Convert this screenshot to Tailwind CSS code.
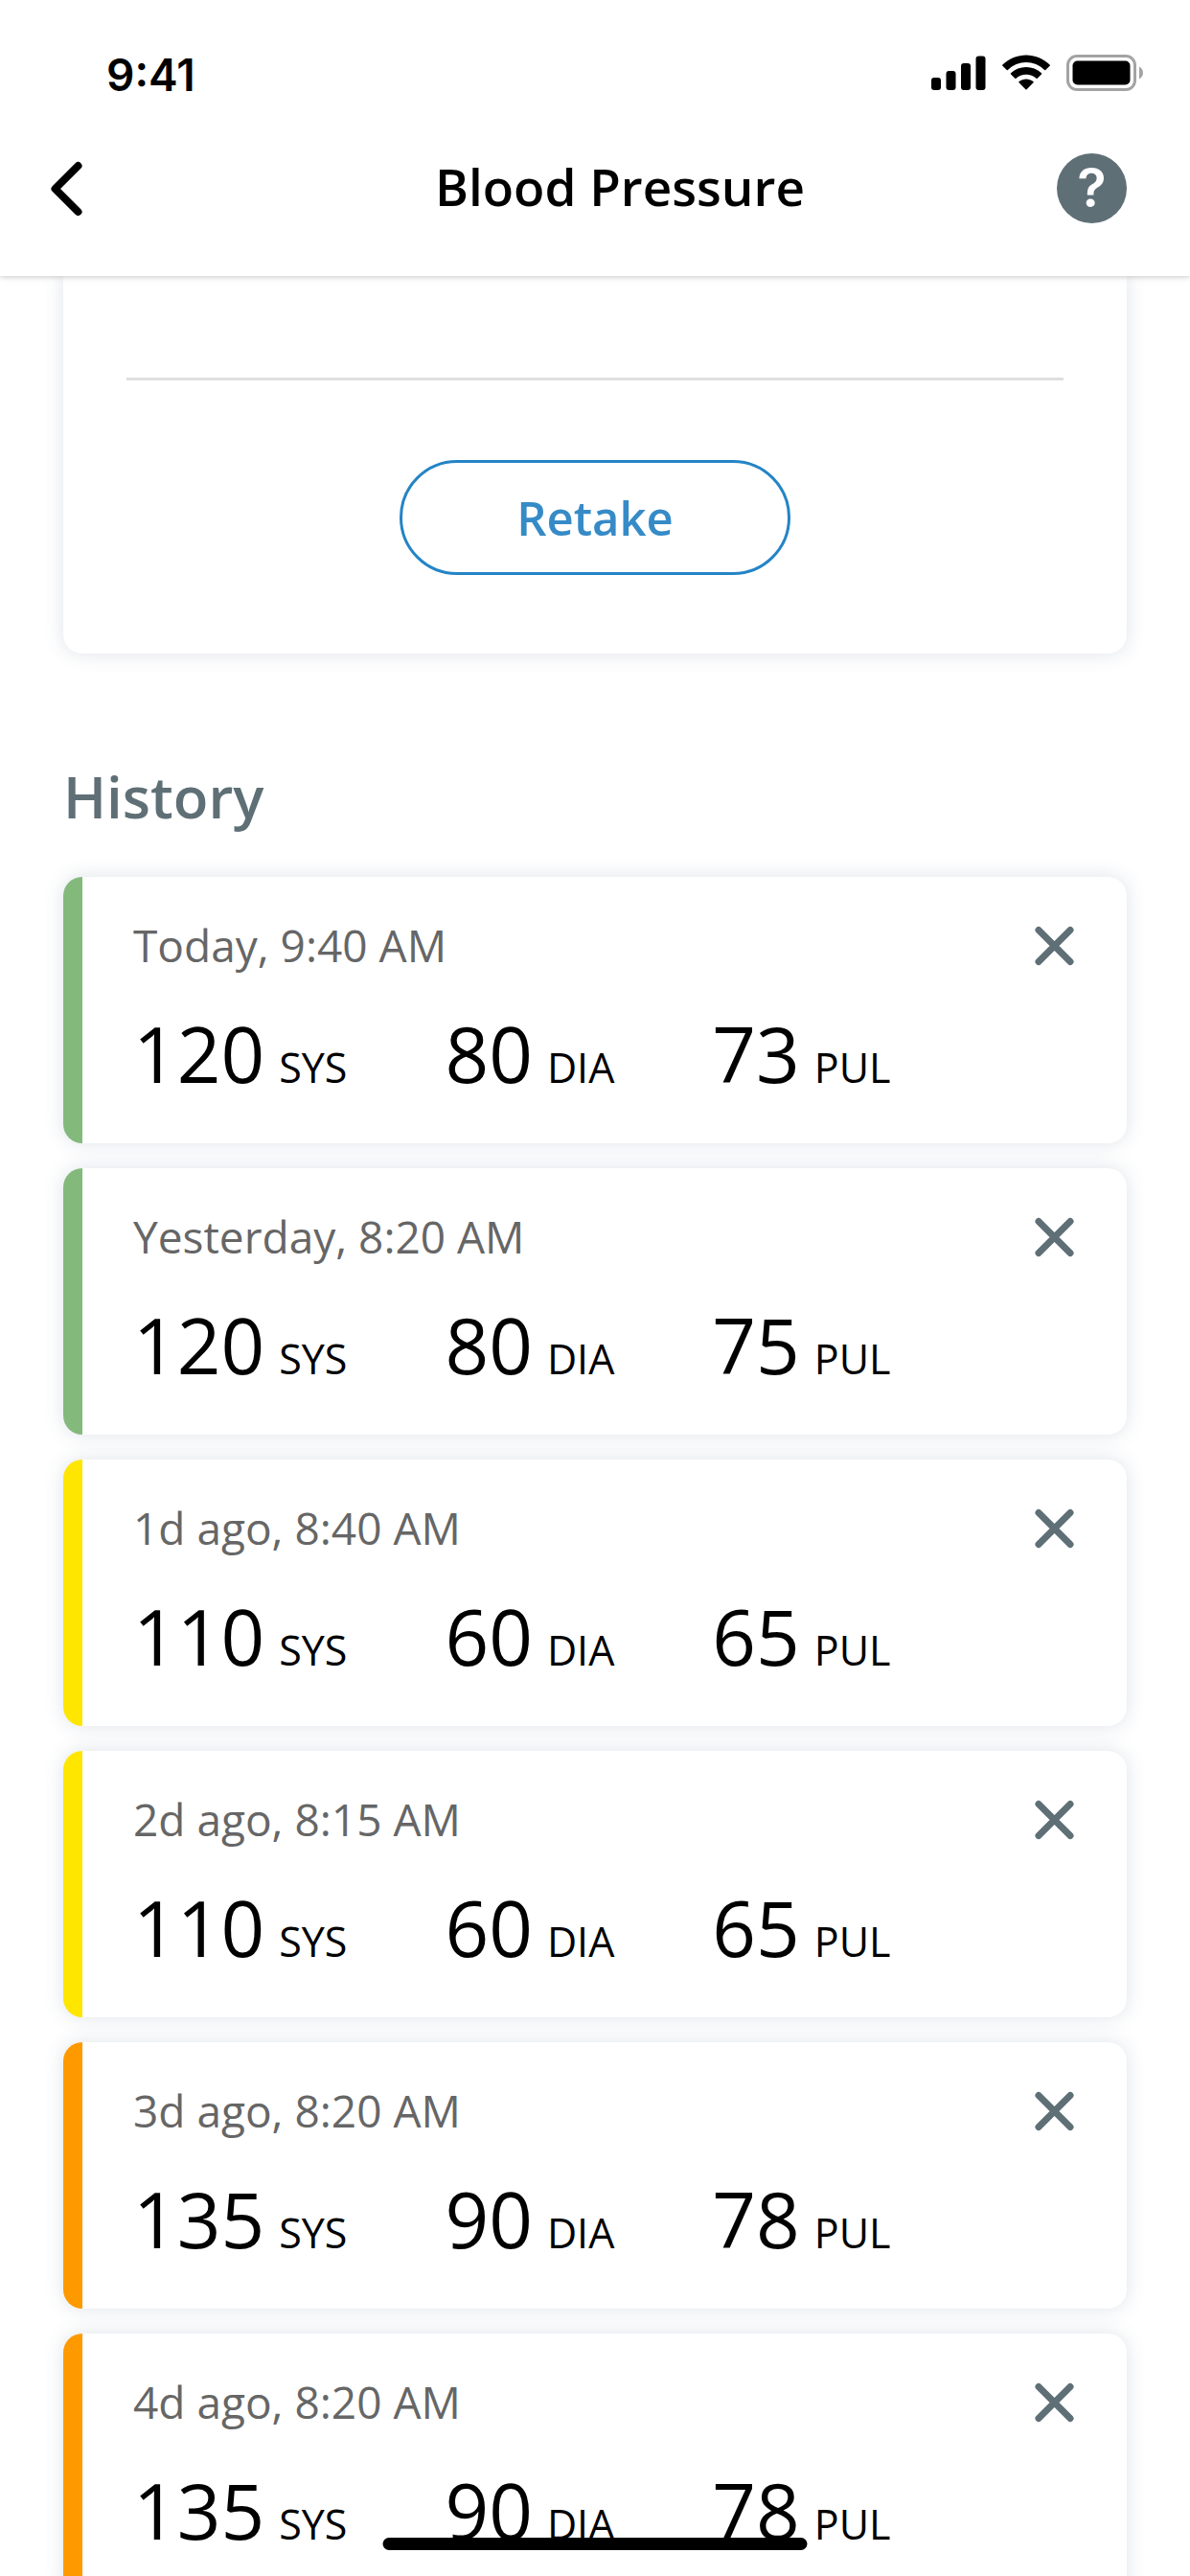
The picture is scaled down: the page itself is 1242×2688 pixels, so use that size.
<!DOCTYPE html>
<html lang="en">
<head>
<meta charset="utf-8">
<meta name="viewport" content="width=device-width, initial-scale=1">
<title>Blood Pressure</title>
<script src="https://cdn.jsdelivr.net/npm/@tailwindcss/browser@4"></script>
</head>
<body class="h-screen flex flex-col overflow-hidden bg-white font-['Open_Sans',sans-serif] text-black">

<header class="relative z-10 shrink-0 bg-white pb-12 shadow-[0_1px_6px_rgba(0,0,0,0.22)]">
  <!-- Status bar -->
  <div class="flex h-[152px] items-center justify-between pr-12 pl-[111px]">
    <time class="pt-1 font-['Inter',sans-serif] text-[46px] leading-[56px] font-semibold">9:41</time>
    <div class="flex items-center gap-[17px]">
      <svg class="h-10 w-[57px]" viewBox="0 0 57 40" aria-hidden="true">
        <rect x="0" y="25" width="10" height="13" rx="3"/>
        <rect x="15.500" y="18" width="10" height="20" rx="3"/>
        <rect x="31" y="10" width="10" height="28" rx="3"/>
        <rect x="46.500" y="2.500" width="10" height="35.500" rx="3"/>
      </svg>
      <svg class="h-10 w-[50px]" viewBox="0 0 50 40" aria-hidden="true">
        <path d="M25 9C32 9 39 11.800 44.100 17.100Q44.700 17.500 45.300 17L49.600 12.800Q50.200 12.200 49.600 11.600C35.900-2 14.100-2 .4 11.600Q-.2 12.200 .4 12.800L4.700 17Q5.300 17.500 5.900 17.100C11 11.800 18 9 25 9Z"/>
        <path d="M25 21.700C28.900 21.700 32.600 23.100 35.500 25.700Q36.100 26.200 36.700 25.700L41 21.500Q41.600 20.900 41 20.300C32 11.900 18 11.900 9 20.300Q8.400 20.900 9 21.500L13.300 25.700Q13.900 26.200 14.500 25.700C17.400 23.100 21.100 21.700 25 21.700Z"/>
        <path d="M32.500 30.300Q33.100 29.700 32.400 29.100C28.100 25.600 21.900 25.600 17.600 29.100Q16.900 29.700 17.500 30.300L24.400 37.300Q25 37.900 25.600 37.300Z"/>
      </svg>
      <svg class="h-10 w-[81px]" viewBox="0 0 81 40" aria-hidden="true">
        <rect x="1.500" y="2.500" width="70" height="35" rx="9.500" fill="none" stroke="#a3a3a3" stroke-width="3"/>
        <rect x="6.500" y="7.500" width="60" height="25" rx="5"/>
        <path d="M76 13.500C81.300 16 81.300 24 76 26.500Z" fill="#a3a3a3"/>
      </svg>
    </div>
  </div>

  <!-- Navigation bar -->
  <div class="grid h-[88px] grid-cols-[1fr_auto_1fr] items-center px-[66px]">
    <button type="button" aria-label="Back" class="-ml-[18px] justify-self-start">
      <svg class="h-[60px] w-[42px]" viewBox="0 0 42 60" fill="none" stroke="#000" stroke-width="8" stroke-linecap="round" stroke-linejoin="round" aria-hidden="true">
        <path d="M33.500 7 9.500 31 33.500 55"/>
      </svg>
    </button>
    <h1 class="pb-0.5 pl-[52px] text-[53px] leading-[72px] font-semibold">Blood Pressure</h1>
    <button type="button" aria-label="Help" class="grid size-[73px] place-items-center justify-self-end rounded-full bg-[#5f6f76] font-['Inter',sans-serif] text-[56px] leading-[72px] font-semibold text-white">?</button>
  </div>
</header>

<main class="min-h-0 flex-1 overflow-y-auto px-[66px] [scrollbar-width:none]">
  <!-- Latest measurement -->
  <section aria-label="Latest measurement" class="rounded-b-[20px] bg-white px-[66px] pt-[106px] pb-[82px] shadow-[0_0_20px_rgba(60,85,120,0.17)]">
    <hr class="border-t-3 border-[#dfdfdf]">
    <button type="button" class="mx-auto mt-[83px] block h-[120px] w-[408px] rounded-full border-3 border-[#2484c6] text-[49px] leading-[72px] font-semibold text-[#368bc7]">Retake</button>
  </section>

  <section aria-labelledby="history">
    <h2 id="history" class="pt-[109px] text-[60px] leading-[80px] font-semibold text-[#5f6f76]">History</h2>
    <ul id="readings" class="mt-[44px] flex flex-col gap-[26px] pb-[26px]"></ul>
  </section>
</main>

<!-- Home indicator -->
<div class="fixed bottom-[27px] left-1/2 z-20 h-[13px] w-[443px] -translate-x-1/2 rounded-full bg-black"></div>

<template id="reading">
  <li class="rounded-[20px] border-l-20 bg-white pr-[46px] pl-[53px] pt-[41px] pb-[44px] shadow-[0_0_20px_rgba(60,85,120,0.17)]">
    <div class="flex items-center justify-between">
      <time data-f="when" class="text-[46px] leading-[60px] text-[#666]"></time>
      <button type="button" aria-label="Delete reading">
        <svg class="size-[60px]" viewBox="0 0 60 60" fill="none" stroke="#5f6f76" stroke-width="7" stroke-linecap="round" aria-hidden="true">
          <path d="M14 14.500 47 47.500M47 14.500 14 47.500"/>
        </svg>
      </button>
    </div>
    <dl class="mt-[33px] flex gap-[102px]">
      <div class="flex flex-row-reverse items-baseline gap-[15px]"><dt class="text-[43px] leading-[48px]">SYS</dt><dd data-f="sys" class="text-[80px] leading-[100px]"></dd></div>
      <div class="flex flex-row-reverse items-baseline gap-[15px]"><dt class="text-[43px] leading-[48px]">DIA</dt><dd data-f="dia" class="text-[80px] leading-[100px]"></dd></div>
      <div class="flex flex-row-reverse items-baseline gap-[15px]"><dt class="text-[43px] leading-[48px]">PUL</dt><dd data-f="pul" class="text-[80px] leading-[100px]"></dd></div>
    </dl>
  </li>
</template>

<script>
  const levels = { normal: 'border-l-[#84b97c]', low: 'border-l-[#ffe600]', high: 'border-l-[#ff9900]' };
  const readings = [
    { when: 'Today, 9:40 AM', sys: 120, dia: 80, pul: 73, level: 'normal' },
    { when: 'Yesterday, 8:20 AM', sys: 120, dia: 80, pul: 75, level: 'normal' },
    { when: '1d ago, 8:40 AM', sys: 110, dia: 60, pul: 65, level: 'low' },
    { when: '2d ago, 8:15 AM', sys: 110, dia: 60, pul: 65, level: 'low' },
    { when: '3d ago, 8:20 AM', sys: 135, dia: 90, pul: 78, level: 'high' },
    { when: '4d ago, 8:20 AM', sys: 135, dia: 90, pul: 78, level: 'high' },
  ];
  const list = document.getElementById('readings');
  const template = document.getElementById('reading');
  for (const reading of readings) {
    const item = template.content.cloneNode(true);
    item.querySelector('li').classList.add(levels[reading.level]);
    item.querySelectorAll('[data-f]').forEach(el => { el.textContent = reading[el.dataset.f]; });
    list.append(item);
  }
</script>
</body>
</html>
